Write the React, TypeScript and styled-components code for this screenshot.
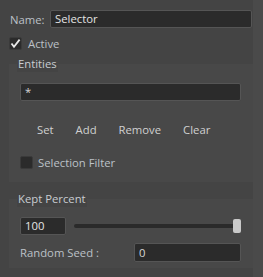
import React from "react";
import styled, { createGlobalStyle } from "styled-components";

const Global = createGlobalStyle`
  html, body { margin: 0; padding: 0; background: #444444; }
  body { font-family: "Open Sans", "DejaVu Sans", sans-serif; font-size: 11.3px; }
  * { box-sizing: border-box; }
`;

const Frame = styled.div`
  width: 263px;
  height: 277px;
  display: flex;
  background: #444444;
  overflow: hidden;
`;

const Main = styled.div`
  width: 253px;
  display: flex;
  flex-direction: column;
  padding-top: 10px;
`;

const Gutter = styled.div`
  width: 10px;
  background: #4a4a4a;
`;

const Row = styled.div<{ $top?: number; $left?: number; $h?: number }>`
  display: flex;
  align-items: center;
  margin-top: ${(p) => p.$top ?? 0}px;
  padding-left: ${(p) => p.$left ?? 0}px;
  height: ${(p) => p.$h ?? 18}px;
`;

const Label = styled.span<{ $w?: number }>`
  color: #bcc1c7;
  white-space: nowrap;
  ${(p) => (p.$w ? `width: ${p.$w}px; flex: none;` : "")}
`;

const Field = styled.div<{ $w?: number; $h?: number; $ml?: number; $mr?: number; $bright?: boolean }>`
  height: ${(p) => p.$h ?? 18}px;
  ${(p) => (p.$w ? `width: ${p.$w}px; flex: none;` : "flex: 1;")}
  margin-left: ${(p) => p.$ml ?? 0}px;
  margin-right: ${(p) => p.$mr ?? 0}px;
  background: #2b2b2b;
  border: 1px solid #555555;
  border-radius: 2px;
  color: ${(p) => (p.$bright ? "#e4e4e4" : "#d6d6d6")};
  display: flex;
  align-items: center;
  padding-left: 4px;
  line-height: 1;
  white-space: nowrap;
`;

const Box = styled.span`
  width: 13px;
  height: 13px;
  flex: none;
  background: #2b2b2b;
  border: 1px solid #3a3a3a;
  border-radius: 2px;
  display: flex;
  align-items: center;
  justify-content: center;
`;

const CheckLabel = styled(Label)<{ $gap: number }>`
  margin-left: ${(p) => p.$gap}px;
`;

const Section = styled.div<{ $top: number }>`
  display: flex;
  flex-direction: column;
  margin-top: ${(p) => p.$top}px;
`;

const Title = styled.span`
  position: relative;
  z-index: 1;
  align-self: flex-start;
  margin: 0 0 -8px 17px;
  padding: 0 1px;
  height: 16px;
  line-height: 16px;
  background: #444444;
  color: #c8ccd1;
`;

const GroupBox = styled.div<{ $pt: number; $pb: number }>`
  margin-left: 9px;
  background: #484848;
  display: flex;
  flex-direction: column;
  padding-top: ${(p) => p.$pt}px;
  padding-bottom: ${(p) => p.$pb}px;
`;

const ButtonBar = styled.div`
  display: flex;
  margin-top: 18px;
  padding-left: 17px;
  height: 20px;
`;

const FlatButton = styled.button`
  background: none;
  border: none;
  padding: 0 11px;
  font: inherit;
  color: #d0d0d0;
  height: 20px;
  cursor: pointer;
`;

const Slider = styled.div`
  flex: 1;
  display: flex;
  align-items: center;
  margin-left: 8px;
  margin-right: 12px;
  height: 18px;
`;

const Track = styled.div`
  flex: 1;
  height: 4px;
  border-radius: 2px;
  background: #2a2a2a;
`;

const Thumb = styled.div`
  width: 8px;
  height: 14px;
  margin-left: -2px;
  border-radius: 2px;
  background: #c9c9c9;
`;

function Check({ checked }: { checked?: boolean }) {
  return (
    <Box>
      {checked && (
        <svg width="11" height="11" viewBox="0 0 11 11">
          <path d="M1.5 5.5 L4 8.8 L9.6 1.6" fill="none" stroke="#e8e8e8" strokeWidth="1.8" />
        </svg>
      )}
    </Box>
  );
}

export default function App() {
  return (
    <>
      <Global />
      <Frame>
        <Main>
          <Row $left={10}>
            <Label $w={40}>Name:</Label>
            <Field $mr={1} $bright>Selector</Field>
          </Row>
          <Row $top={9} $left={9} $h={13}>
            <Check checked />
            <CheckLabel $gap={6}>Active</CheckLabel>
          </Row>
          <Section $top={6}>
            <Title>Entities</Title>
            <GroupBox $pt={19} $pb={13}>
              <Row>
                <Field $ml={11} $mr={12}>*</Field>
              </Row>
              <ButtonBar>
                <FlatButton>Set</FlatButton>
                <FlatButton>Add</FlatButton>
                <FlatButton>Remove</FlatButton>
                <FlatButton>Clear</FlatButton>
              </ButtonBar>
              <Row $top={17} $left={11} $h={13}>
                <Check />
                <CheckLabel $gap={5}>Selection Filter</CheckLabel>
              </Row>
            </GroupBox>
          </Section>
          <Section $top={9}>
            <Title>Kept Percent</Title>
            <GroupBox $pt={18} $pb={6}>
              <Row $left={11}>
                <Field $w={46} $bright>100</Field>
                <Slider>
                  <Track />
                  <Thumb />
                </Slider>
              </Row>
              <Row $top={8} $left={11} $h={19}>
                <Label $w={114}>Random Seed :</Label>
                <Field $w={107} $h={19}>0</Field>
              </Row>
            </GroupBox>
          </Section>
        </Main>
        <Gutter />
      </Frame>
    </>
  );
}
